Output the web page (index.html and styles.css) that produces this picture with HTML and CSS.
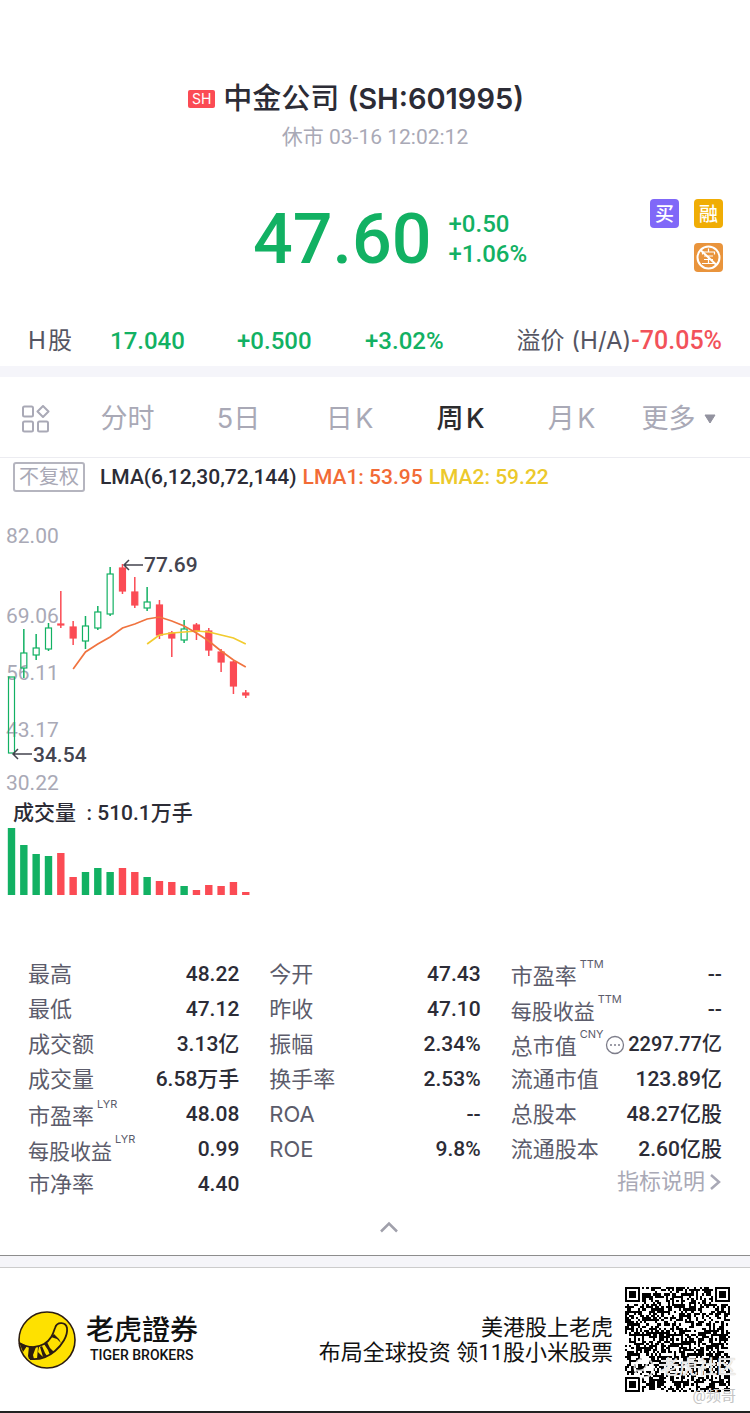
FILE: index.html
```html
<!DOCTYPE html>
<html lang="zh-CN">
<head>
  <meta charset="UTF-8" />
  <meta name="viewport" content="width=device-width, initial-scale=1.0"/>
  <title>中金公司 (SH:601995)</title>
  <link rel="stylesheet" href="styles.css">
</head>
<body>
  <!-- Stock name -->
  <header class="stock-header">
    <h1><span class="market">SH</span><span>中金公司</span> <span class="code">(SH:601995)</span></h1>
    <p class="status">休市 03-16 12:02:12</p>
  </header>

  <!-- Price -->
  <section class="quote">
    <div class="price">47.60</div>
    <div class="change">
      <span>+0.50</span>
      <span>+1.06%</span>
    </div>
    <div class="tags">
      <span class="tag buy">买</span>
      <span class="tag margin">融</span>
      <span class="tag pledge">
        <svg width="29" height="29" viewBox="0 0 29 29" fill="none" stroke="#fff" stroke-width="2">
          <circle cx="14.5" cy="14.5" r="11"/>
          <path d="M6.5 7l16 15"/>
          <path d="M14.5 5.500v3M8.500 11.500V9h12v2.500M10 13h9M10 16.500h9M8 20.500h13M14.500 13v7.500" stroke-width="1.200"/>
        </svg>
      </span>
    </div>
  </section>

  <section class="h-share">
    <span class="label">H&#8202;股</span>
    <span class="up">17.040</span>
    <span class="up">+0.500</span>
    <span class="up">+3.02%</span>
    <span class="premium"><span class="label">溢价 (H/A)</span><span class="down">-70.05%</span></span>
  </section>

  <!-- Period tabs -->
  <nav class="tabs">
    <button class="layout-btn" aria-label="布局">
      <svg width="28" height="28" viewBox="0 0 28 28" fill="none" stroke="#a9a9b6" stroke-width="2">
        <rect x="1" y="1.500" width="10" height="10" rx="1.500"/>
        <rect x="1" y="16.500" width="10" height="10" rx="1.500"/>
        <rect x="16" y="16.500" width="10" height="10" rx="1.500"/>
        <path d="M21 1l5.500 5.500-5.500 5.500-5.500-5.500z" stroke-linejoin="round"/>
      </svg>
    </button>
    <button>分时</button>
    <button>5日</button>
    <button>日&#8202;K</button>
    <button class="active">周&#8202;K</button>
    <button>月&#8202;K</button>
    <button class="more-tabs">更多 <svg width="12" height="10" viewBox="0 0 12 10"><path d="M1 1h10L6 9z" fill="#92929f" stroke="#92929f" stroke-linejoin="round"/></svg></button>
  </nav>

  <!-- Chart -->
  <main class="chart">
    <div class="legend">
      <button class="adjust">不复权</button>
      <span>LMA(6,12,30,72,144)</span>
      <span class="lma1">LMA1: 53.95</span>
      <span class="lma2">LMA2: 59.22</span>
    </div>
    <svg id="candles" width="260" height="280" viewBox="0 0 260 280"></svg>
    <p class="volume-title">成交量&nbsp; : 510.1万手</p>
    <svg id="volume" width="260" height="68" viewBox="0 0 260 68"></svg>
  </main>

  <!-- Key figures -->
  <section class="stats">
    <table>
      <tr><th>最高</th><td>48.22</td></tr>
      <tr><th>最低</th><td>47.12</td></tr>
      <tr><th>成交额</th><td>3.13亿</td></tr>
      <tr><th>成交量</th><td>6.58万手</td></tr>
      <tr><th class="noted">市盈率<sup>LYR</sup></th><td>48.08</td></tr>
      <tr><th class="noted long">每股收益<sup>LYR</sup></th><td>0.99</td></tr>
      <tr><th>市净率</th><td>4.40</td></tr>
    </table>
    <table>
      <tr><th>今开</th><td>47.43</td></tr>
      <tr><th>昨收</th><td>47.10</td></tr>
      <tr><th>振幅</th><td>2.34%</td></tr>
      <tr><th>换手率</th><td>2.53%</td></tr>
      <tr><th>ROA</th><td>--</td></tr>
      <tr><th>ROE</th><td>9.8%</td></tr>
    </table>
    <div>
      <table>
        <tr><th class="noted">市盈率<sup>TTM</sup></th><td>--</td></tr>
        <tr><th class="noted long">每股收益<sup>TTM</sup></th><td>--</td></tr>
        <tr><th class="noted">总市值<sup>CNY</sup></th><td class="cap"><svg class="more" width="20" height="20" viewBox="0 0 20 20"><circle cx="10" cy="10" r="8.500" fill="none" stroke="#7d7d8a" stroke-width="1.300"/><path d="M5 10h2M9 10h2M13 10h2" stroke="#7d7d8a" stroke-width="1.600"/></svg>2297.77亿</td></tr>
        <tr><th>流通市值</th><td>123.89亿</td></tr>
        <tr><th>总股本</th><td>48.27亿股</td></tr>
        <tr><th>流通股本</th><td>2.60亿股</td></tr>
      </table>
      <a class="explain" href="#">指标说明<svg width="14" height="20" viewBox="0 0 14 20"><path d="M3 3l8 7-8 7" fill="none" stroke="#a9a9b6" stroke-width="2.500"/></svg></a>
    </div>
  </section>
  <button class="collapse" aria-label="收起">
    <svg width="20" height="14" viewBox="0 0 20 14"><path d="M2 11.500l8-8 8 8" fill="none" stroke="#a0a0ab" stroke-width="2.500"/></svg>
  </button>

  <!-- Footer -->
  <footer>
    <svg class="logo" width="58" height="58" viewBox="0 0 58 58">
      <circle cx="29" cy="29" r="28" fill="#fee100" stroke="#2c1c10" stroke-width="1.600"/>
      <path d="M1 32C10 37 19 37 26 33S35 23 37 17C39 10 48 11 49 17C50 25 44 34 37 40C30 46 21 49 12 48" fill="none" stroke="#2c1c10" stroke-width="1.800"/>
      <path d="M1 31l8 4-4 6zM11 35l7 1-3 8 1 4-5 0-1-3zM20 36l1 0-1 5 5 5-6 2zM22 36l2-1 3 7 2 3-4 1zM26 33l3-2 3 6 4 4-4 3-2-5zM33 26l3-3 5 5 2 4-4-4z" fill="#2c1c10"/>
    </svg>
    <div class="brand">
      <strong>老虎證券</strong>
      <span>TIGER BROKERS</span>
    </div>
    <p class="slogan">美港股上老虎<br>布局全球投资 领11股小米股票</p>
    <div class="qr">
      <svg id="qr" width="105" height="105" viewBox="0 0 49 49" shape-rendering="crispEdges"></svg>
      <span class="mark community">
        <svg width="22" height="22" viewBox="0 0 22 22" fill="none" stroke="#fff" stroke-opacity="0.800" stroke-width="2">
          <circle cx="11" cy="11" r="9.500"/>
          <path d="M2 13c6 2 11 0 12-7M6 14v4M11 13l2 4"/>
        </svg>
        老虎社区
      </span>
      <span class="mark author">@频哥</span>
    </div>
  </footer>

  <script src="script.js"></script>
</body>
</html>
```
FILE: styles.css
```css
* {
  margin: 0; padding: 0; box-sizing: border-box;
}

body {
  background: #fff;
  color: #2c2c36;
  font-family: Roboto, "Noto Sans CJK SC", sans-serif;
}

button {
  border: none;
  background: none;
  font-family: inherit;
  cursor: pointer;
}

svg {
  display: block;
}

.stock-header {
  padding-top: 79px;
  text-align: center;
}

.stock-header h1 {
  display: flex;
  justify-content: center;
  align-items: center;
  gap: 8px;
  padding-right: 38px;
  font-size: 29px;
  line-height: 40px;
  font-weight: 500;
}

.market {
  padding: 0 4px;
  background: #fb4b54;
  border-radius: 2px;
  color: #fff;
  font-family: Inter, sans-serif;
  font-size: 14px;
  line-height: 18px;
  font-weight: 400;
}

.code {
  font-family: Inter, sans-serif;
  font-weight: 600;
}

.status {
  color: #a9a9b6;
  font-size: 21px;
  line-height: 36px;
}

.quote {
  position: relative;
  display: flex;
  justify-content: center;
  align-items: center;
  gap: 17px;
  padding: 42px 0 0 30px;
  color: #12b163;
}

.price {
  font-size: 70px;
  line-height: 84px;
  font-weight: 500;
}

.change {
  font-size: 24px;
  line-height: 30px;
  font-weight: 500;
}

.change span {
  display: block;
}

.tags {
  position: absolute;
  top: 44px;
  right: 27px;
  display: grid;
  grid-template-columns: 29px 29px;
  gap: 15px;
}

.tag {
  height: 29px;
  border-radius: 4px;
  color: #fff;
  font-size: 19px;
  line-height: 31px;
  font-weight: 500;
  text-align: center;
}

.buy {
  background: #8068f8;
}

.margin {
  background: #f0ad05;
}

.pledge {
  grid-column: 2;
  background: #e9943c;
}

.h-share {
  display: grid;
  grid-template-columns: 82fr 127fr 128fr 148fr 209fr;
  margin-top: 40px;
  padding: 0 28px 5px;
  border-bottom: 11px solid #f5f5fa;
  font-size: 24px;
  line-height: 40px;
  font-weight: 500;
  white-space: nowrap;
}

.label {
  color: #555563;
  font-family: Inter, "Noto Sans CJK SC", sans-serif;
  font-weight: 400;
}

.up {
  color: #12b163;
}

.down {
  color: #f2525a;
  font-size: 25px;
}

.premium {
  justify-self: end;
}

.tabs {
  display: grid;
  grid-template-columns: 72px repeat(6, 1fr);
  padding: 4px 12px 0 0;
  height: 81px;
  border-bottom: 1px solid #ececf1;
}

.tabs button {
  display: flex;
  justify-content: center;
  align-items: center;
  gap: 8px;
  color: #a9a9b6;
  font-family: Inter, "Noto Sans CJK SC", sans-serif;
  font-size: 27px;
  line-height: 40px;
}

.tabs .active {
  color: #2c2c2e;
  font-weight: 500;
}

.tabs .more-tabs {
  padding-right: 8px;
}

.legend {
  display: flex;
  align-items: center;
  gap: 6px;
  padding: 4px 13px 0;
  font-size: 21px;
  line-height: 30px;
  font-weight: 500;
}

.legend .adjust {
  margin-right: 9px;
  width: 72px;
  border: 2px solid #b5b5bf;
  border-radius: 3px;
  color: #a9a9b6;
  font-size: 20px;
  line-height: 26px;
}

.lma1 {
  color: #f26b36;
}

.lma2 {
  color: #ecc92c;
}

#candles {
  margin-top: 28px;
  font-size: 21px;
}

#candles .axis {
  fill: #a9a9b6;
}

#candles .extreme {
  fill: #44444f;
  font-weight: 500;
}

.volume-title {
  padding: 0 0 2px 13px;
  font-size: 21px;
  line-height: 26px;
  font-weight: 500;
}

.stats {
  display: grid;
  grid-template-columns: repeat(3, minmax(0, 1fr));
  align-items: start;
  gap: 30px;
  padding: 61px 28px 0;
}

.stats table {
  display: block;
  font-size: 22px;
  line-height: 35px;
  white-space: nowrap;
}

.stats tbody {
  display: block;
}

.stats tr {
  display: flex;
  justify-content: space-between;
  height: 35px;
}

.stats th {
  color: #5c5c6b;
  font-family: Inter, "Noto Sans CJK SC", sans-serif;
  font-weight: 400;
  text-align: left;
}

.stats .noted {
  line-height: 39px;
}

.stats .long {
  font-size: 21px;
}

.stats td {
  font-size: 21px;
  font-weight: 500;
  text-align: right;
}

.stats .cap {
  display: flex;
  align-items: center;
  gap: 3px;
  font-size: 20px;
}

.stats sup {
  margin-left: 3px;
  font-size: 11px;
  line-height: 11px;
  vertical-align: 16px;
}

.explain {
  display: flex;
  justify-content: flex-end;
  align-items: center;
  gap: 3px;
  color: #a9a9b6;
  font-size: 22px;
  line-height: 30px;
  text-decoration: none;
}

.collapse {
  display: block;
  margin: 18px auto 0;
  padding-left: 27px;
}

footer {
  display: flex;
  align-items: center;
  height: 158px;
  margin-top: 21px;
  padding: 12px 20px 0 18px;
  border-top: 1px solid #8d8d8d;
  border-bottom: 2px solid #222;
  background: linear-gradient(#f5f5f9 11px, #ccc 11px, #ccc 12px, #fff 12px);
  color: #111;
}

.brand {
  margin-left: 10px;
}

.brand strong,
.brand span {
  display: block;
}

.brand strong {
  font-size: 28px;
  line-height: 30px;
  font-weight: 500;
}

.brand span {
  padding-left: 4px;
  font-size: 14px;
  line-height: 18px;
  font-weight: 500;
}

.slogan {
  margin-left: auto;
  font-size: 22px;
  line-height: 25px;
  text-align: right;
}

.qr {
  position: relative;
  margin-left: 12px;
}

.mark {
  position: absolute;
  color: rgba(255, 255, 255, 0.8);
  white-space: nowrap;
}

.community {
  right: -6px;
  bottom: 10px;
  display: flex;
  align-items: center;
  gap: 5px;
  font-size: 19px;
  line-height: 28px;
  font-weight: 500;
  text-shadow: 0 0 1px #aaa;
}

.author {
  right: -6px;
  bottom: -14px;
  color: #c4c4c4;
  font-size: 15px;
  line-height: 20px;
}
```
FILE: script.js
```js
// one entry per week: colour, high, body top, body bottom, low, volume
const weeks = [
  ['g', 157, 157, 233, 233, 67],
  ['g', 109, 133, 148, 158, 50],
  ['g', 114, 128, 135, 140, 41],
  ['g', 103, 108, 129, 131, 39],
  ['r', 71, 104, 105, 108, 42],
  ['r', 101, 107, 118, 125, 18],
  ['g', 96, 106, 121, 129, 23],
  ['g', 86, 92, 108, 110, 27],
  ['g', 47, 54, 94, 96, 23],
  ['r', 44, 48, 71, 74, 27],
  ['r', 57, 72, 85, 88, 23],
  ['g', 67, 82, 88, 91, 18],
  ['r', 80, 85, 115, 119, 14],
  ['r', 111, 113, 118, 137, 13],
  ['g', 100, 109, 120, 123, 9],
  ['r', 103, 105, 111, 120, 5],
  ['r', 108, 111, 130, 136, 10],
  ['r', 129, 132, 142, 152, 9],
  ['r', 141, 142, 166, 174, 13],
  ['r', 170, 173, 175, 178, 3]
];
const lma1 = [149, 132, 124, 117, 108, 104, 99, 97, 101, 106, 113, 121, 131, 140, 147];
const lma2 = [124, 115, 113, 112, 111, 112, 115, 118, 124];
const colors = { g: '#12b163', r: '#fb4b54' };

const xOf = i => 11.5 + i * 12.33;

function line(values, color) {
  const first = weeks.length - values.length;
  const points = values.map((y, i) => `${xOf(first + i)},${y}`).join(' ');
  return `<polyline points="${points}" fill="none" stroke="${color}" stroke-width="1.7"/>`;
}

function arrow(x, y) {
  return `<path d="M${x + 20} ${y}h-19M${x + 6} ${y - 5}l-5 5 5 5" fill="none" stroke="#44444f" stroke-width="1.5"/>`;
}

function drawCandles() {
  let out = '';
  [['82.00', 23], ['69.06', 103], ['56.11', 160], ['43.17', 217], ['30.22', 270]].forEach(([t, y]) => {
    out += `<text class="axis" x="6" y="${y}">${t}</text>`;
  });
  weeks.forEach(([c, high, top, bottom, low], i) => {
    const x = xOf(i);
    const fill = c === 'g' ? 'none' : colors.r;
    out += `<path d="M${x} ${high}V${top}M${x} ${bottom}V${low}" stroke="${colors[c]}" stroke-width="1.5"/>`;
    out += `<rect x="${x - 3}" y="${top}" width="6" height="${bottom - top}" fill="${fill}" stroke="${colors[c]}" stroke-width="1.2"/>`;
  });
  out += line(lma2, '#f2cb2e') + line(lma1, '#f0733f');
  out += arrow(123, 45) + '<text class="extreme" x="144" y="52">77.69</text>';
  out += arrow(12, 234) + '<text class="extreme" x="33" y="242">34.54</text>';
  document.getElementById('candles').innerHTML = out;
}

function drawVolume() {
  document.getElementById('volume').innerHTML = weeks.map((w, i) =>
    `<rect x="${xOf(i) - 3.7}" y="${67 - w[5]}" width="7.4" height="${w[5]}" fill="${colors[w[0]]}"/>`
  ).join('');
}

function drawQr() {
  const n = 49;
  let seed = 601995;
  let d = '';
  const ring = (x, y, cx, cy) => Math.max(Math.abs(x - cx), Math.abs(y - cy));
  for (let y = 0; y < n; y++) {
    for (let x = 0; x < n; x++) {
      seed = (seed * 48271) % 2147483647;
      let dark = seed / 2147483647 < 0.52;
      // alignment marks
      [[24, 24], [42, 42], [24, 42], [42, 24], [6, 24], [24, 6]].forEach(([cx, cy]) => {
        const r = ring(x, y, cx, cy);
        if (r <= 2) dark = r !== 1;
      });
      // finder squares
      [[3, 3], [45, 3], [3, 45]].forEach(([cx, cy]) => {
        const r = ring(x, y, cx, cy);
        if (r <= 4) dark = r !== 2 && r !== 4;
      });
      if (dark) d += `M${x} ${y}h1v1h-1z`;
    }
  }
  document.getElementById('qr').innerHTML = `<path d="${d}"/>`;
}

drawCandles();
drawVolume();
drawQr();
```
